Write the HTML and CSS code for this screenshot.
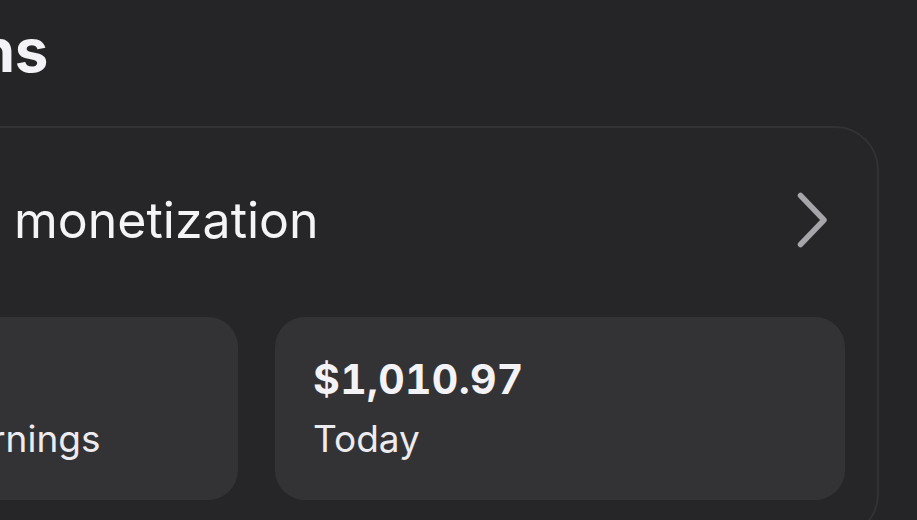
FILE: index.html
```html
<!DOCTYPE html>
<html lang="en">
<head>
    <meta charset="UTF-8">
    <meta name="viewport" content="width=device-width, initial-scale=1.0">
    <title>Subscriptions</title>
    <link rel="stylesheet" href="styles.css">
</head>
<body>
    <div class="screen">
        <h1 class="page-title">Subscriptions</h1>

        <section class="panel">
            <div class="panel-head">
                <span class="panel-title">Content monetization</span>
                <svg class="chevron" width="32" height="56" viewBox="0 0 32 56" aria-hidden="true">
                    <polyline points="3.5,3.5 27,28 3.5,52.5" fill="none" stroke="currentColor" stroke-width="5.5" stroke-linecap="round" stroke-linejoin="round"/>
                </svg>
            </div>

            <div class="stats">
                <div class="stat-card">
                    <div class="stat-value">$48,210.55</div>
                    <div class="stat-label">Total estimated earnings</div>
                </div>
                <div class="stat-card">
                    <div class="stat-value">$1,010.97</div>
                    <div class="stat-label">Today</div>
                </div>
            </div>
        </section>
    </div>
</body>
</html>
```

FILE: styles.css
```css
html, body { margin: 0; padding: 0; }
body { background-color: #252527; color: #f2f2f6; font-family: Inter, "Noto Sans", sans-serif; overflow: hidden; }

.screen { width: 1284px; margin-left: -405px; padding-top: 14px; }

.page-title { margin: 0; padding-left: 51px; font-size: 60px; line-height: 72px; font-weight: 700; letter-spacing: -0.5px; color: #f3f3f7; }

.panel { margin-top: 40px; box-sizing: border-box; width: 1284px; padding: 0 32px 36px 36px; border: 2px solid #323235; border-radius: 44px; background-color: #262628; }
.panel-head { height: 184px; display: flex; align-items: center; justify-content: space-between; padding-left: 174px; }
.panel-title { font-size: 50px; line-height: 60px; font-weight: 400; word-spacing: 6px; color: #f4f4f7; }
.chevron { color: #a5a5aa; margin-right: 16px; flex-shrink: 0; }

.stats { margin-top: 5px; display: grid; grid-template-columns: 1fr 570px; gap: 37px; }
.stat-card { height: 183px; box-sizing: border-box; padding: 38px 38px 0; border-radius: 30px; background-color: #333336; }
.stat-value { font-size: 41px; line-height: 48px; font-weight: 700; letter-spacing: 0.3px; font-feature-settings: "tnum"; color: #f3f3f7; }
.stat-label { margin-top: 14px; font-size: 37px; line-height: 44px; font-weight: 400; color: #ececf0; }
```
